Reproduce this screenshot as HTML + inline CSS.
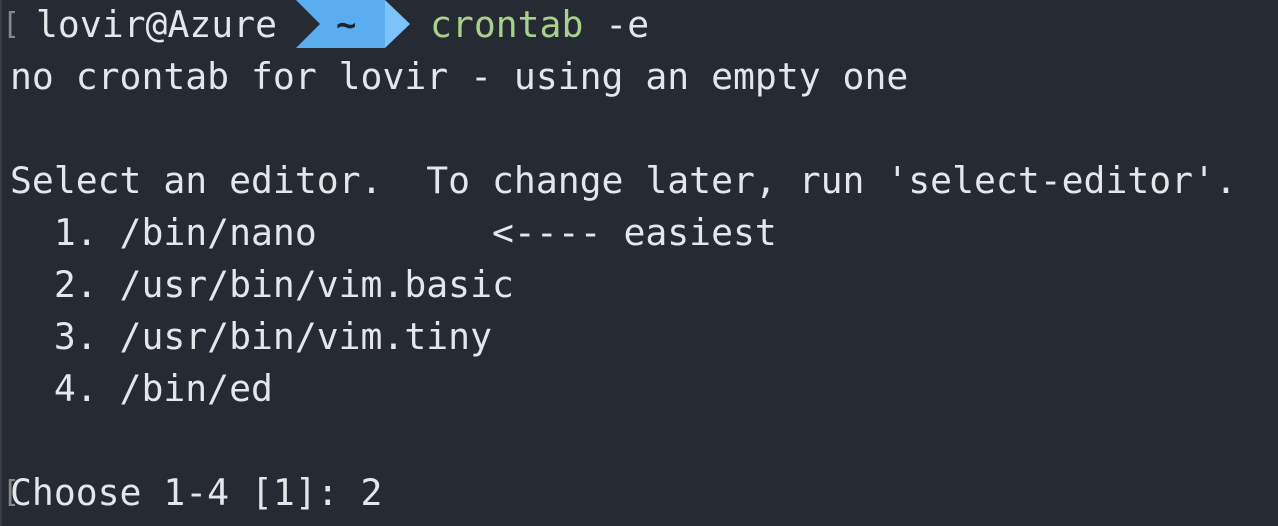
<!DOCTYPE html><html><head><style>
body{margin:0;width:1278px;height:526px;background:#262a33;overflow:hidden;position:relative;font-family:"DejaVu Sans Mono","Liberation Mono",monospace;font-size:36.4px;color:#e4e6ea}
.l{position:absolute;left:10px;white-space:pre;line-height:52px;height:52px}
.br{position:absolute;color:#888;font-size:30px;line-height:52px}
</style></head><body>
<div style="position:absolute;left:0;top:0;width:2px;height:526px;background:#3a3e47"></div>
<svg style="position:absolute;left:0;top:0" width="1278" height="526">
<polygon points="296,0 385,0 385,48 296,48 320,24" fill="#5aaef0"/>
<polygon points="385,0 410,24 385,48" fill="#7cc2fb"/>
</svg>
<div class="br" style="left:2px;top:-1px">[</div>
<div class="l" style="left:36px;top:-1px">lovir@Azure</div>
<div class="l" style="left:336px;top:-1px;color:#1d2430;font-size:34px;font-weight:bold">~</div>
<div class="l" style="left:430px;top:-1px"><span style="color:#a9d18e">crontab</span> -e</div>
<div class="l" style="top:51px">no crontab for lovir - using an empty one</div>
<div class="l" style="top:155px">Select an editor.  To change later, run 'select-editor'.</div>
<div class="l" style="top:207px">  1. /bin/nano        &lt;---- easiest</div>
<div class="l" style="top:259px">  2. /usr/bin/vim.basic</div>
<div class="l" style="top:311px">  3. /usr/bin/vim.tiny</div>
<div class="l" style="top:363px">  4. /bin/ed</div>
<div class="br" style="left:2px;top:467px">[</div>
<div class="l" style="top:467px">Choose 1-4 [1]: 2</div>
</body></html>
